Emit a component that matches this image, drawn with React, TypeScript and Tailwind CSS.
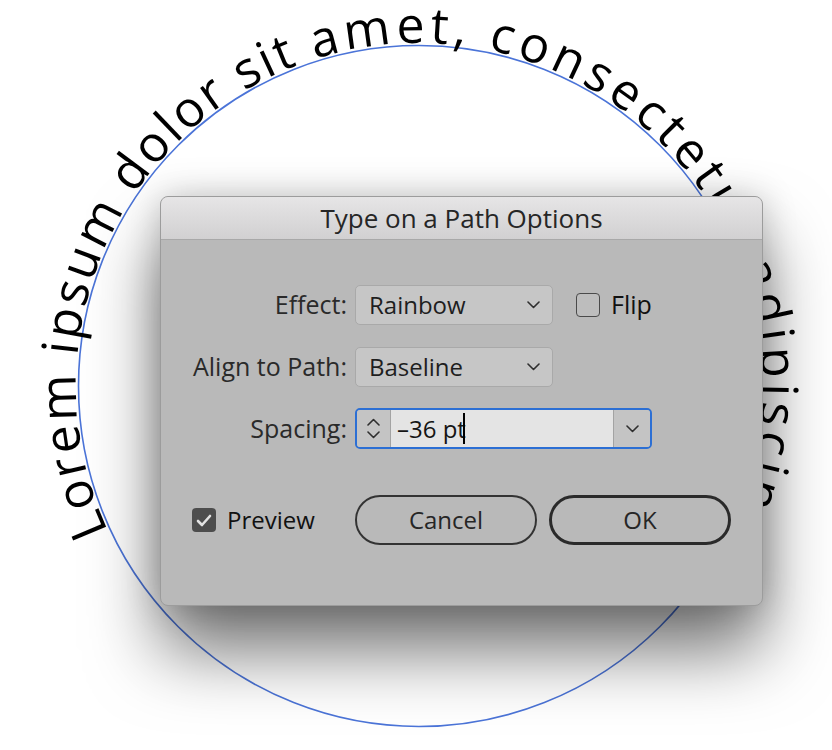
// Type on a Path Options – dialog over a circle of text

const CX = 419;
const CY = 386;
const TR = 343; // text baseline radius

function arcPath(): string {
    const a = (155 * Math.PI) / 180;
    const x1 = CX + TR * Math.cos(a);
    const y1 = CY + TR * Math.sin(a);
    const x2 = CX - TR * Math.cos(a);
    const y2 = CY - TR * Math.sin(a);
    return `M${x1} ${y1} A${TR} ${TR} 0 1 1 ${x2} ${y2} A${TR} ${TR} 0 1 1 ${x1} ${y1}`;
}

function Chevron({ up = false }: { up?: boolean }) {
    return (
        <svg width="13" height="8" viewBox="0 0 13 8" fill="none">
            <path
                d={up ? "M1 7 L6.5 1.5 L12 7" : "M1 1 L6.5 6.5 L12 1"}
                stroke="#2f2f2f"
                strokeWidth="1.6"
                strokeLinecap="round"
                strokeLinejoin="round"
            />
        </svg>
    );
}

function Select({ value }: { value: string }) {
    return (
        <div className="flex h-[40px] w-[198px] items-center justify-between rounded-[5px] border border-[#a9a9a9] bg-[#c6c6c6] pl-[13px] pr-[12px] text-[#1e1e1e]">
            <span>{value}</span>
            <Chevron />
        </div>
    );
}

export default function App() {
    return (
        <div className="relative h-[750px] w-[832px] overflow-hidden bg-white font-['Open_Sans','Noto_Sans',sans-serif]">
            {/* circle with text on path */}
            <svg width="832" height="750" className="absolute left-0 top-0">
                <defs>
                    <path id="textArc" d={arcPath()} />
                </defs>
                <circle cx={CX} cy={CY} r={340.5} fill="none" stroke="#4b74d8" strokeWidth="1.6" />
                <text fontFamily="'Open Sans', sans-serif" fontSize="50" fill="#000">
                    <textPath href="#textArc">
                        <tspan style={{ letterSpacing: "2.6px" }}>Lorem ipsum dolor sit </tspan>
                        <tspan style={{ letterSpacing: "4.8px" }}>amet, consectetur adipiscing</tspan>
                    </textPath>
                </text>
            </svg>

            {/* dialog */}
            <div className="absolute left-[160px] top-[196px] flex h-[410px] w-[603px] flex-col overflow-hidden rounded-[8px] border border-[#9c9c9c] bg-[#b9b9b9] text-[24px] shadow-[0_45px_70px_rgba(0,0,0,0.55),0_0_35px_rgba(0,0,0,0.2)]">
                <div className="flex h-[43px] items-center justify-center border-b border-[#a8a8a8] bg-gradient-to-b from-[#e6e5e6] to-[#d1d0d1] text-[26px] text-[#262626]">
                    Type on a Path Options
                </div>

                {/* Effect */}
                <div className="mt-[45px] flex items-center">
                    <div className="w-[186px] text-right text-[25px] text-[#2a2a2a]">Effect:</div>
                    <div className="ml-2">
                        <Select value="Rainbow" />
                    </div>
                    <div className="ml-[23px] h-[24px] w-[24px] rounded-[4px] border-[1.5px] border-[#4a4a4a] bg-[#bdbdbd]" />
                    <span className="ml-[11px] text-[25px] text-[#111]">Flip</span>
                </div>

                {/* Align to Path */}
                <div className="mt-[22px] flex items-center">
                    <div className="w-[186px] text-right text-[25px] text-[#2a2a2a]">Align to Path:</div>
                    <div className="ml-2">
                        <Select value="Baseline" />
                    </div>
                </div>

                {/* Spacing */}
                <div className="mt-[21px] flex items-center">
                    <div className="w-[186px] text-right text-[25px] text-[#2a2a2a]">Spacing:</div>
                    <div className="ml-2 flex h-[41px] w-[297px] overflow-hidden rounded-[5px] border-2 border-[#2c6fd4]">
                        <div className="flex w-[34px] flex-col items-center justify-center gap-[5px] border-r border-[#a3a3a3] bg-[#c4c4c4]">
                            <Chevron up />
                            <Chevron />
                        </div>
                        <div className="flex flex-1 items-center bg-[#e4e4e4] pl-[6px] text-[#151515]">
                            <span>–36 pt</span>
                            <span className="ml-[-3px] h-[31px] w-[2px] bg-black" />
                        </div>
                        <div className="flex w-[37px] items-center justify-center border-l border-[#a3a3a3] bg-[#c4c4c4]">
                            <Chevron />
                        </div>
                    </div>
                </div>

                {/* Preview + buttons */}
                <div className="mt-[46px] flex items-center">
                    <div className="flex w-[186px] items-center pl-[31px]">
                        <div className="flex h-[24px] w-[24px] items-center justify-center rounded-[4px] bg-[#4d4d4d]">
                            <svg width="16" height="13" viewBox="0 0 16 13" fill="none">
                                <path
                                    d="M2 7 L6 11 L14 2"
                                    stroke="#e2e2e2"
                                    strokeWidth="2.6"
                                    strokeLinecap="round"
                                    strokeLinejoin="round"
                                />
                            </svg>
                        </div>
                        <span className="ml-[11px] text-[#111]">Preview</span>
                    </div>
                    <button className="ml-2 flex h-[50px] w-[182px] items-center justify-center rounded-full border-2 border-[#333] text-[#262626]">
                        Cancel
                    </button>
                    <button className="ml-3 flex h-[50px] w-[182px] items-center justify-center rounded-full border-[3px] border-[#2a2a2a] text-[#262626]">
                        OK
                    </button>
                </div>
            </div>
        </div>
    );
}
